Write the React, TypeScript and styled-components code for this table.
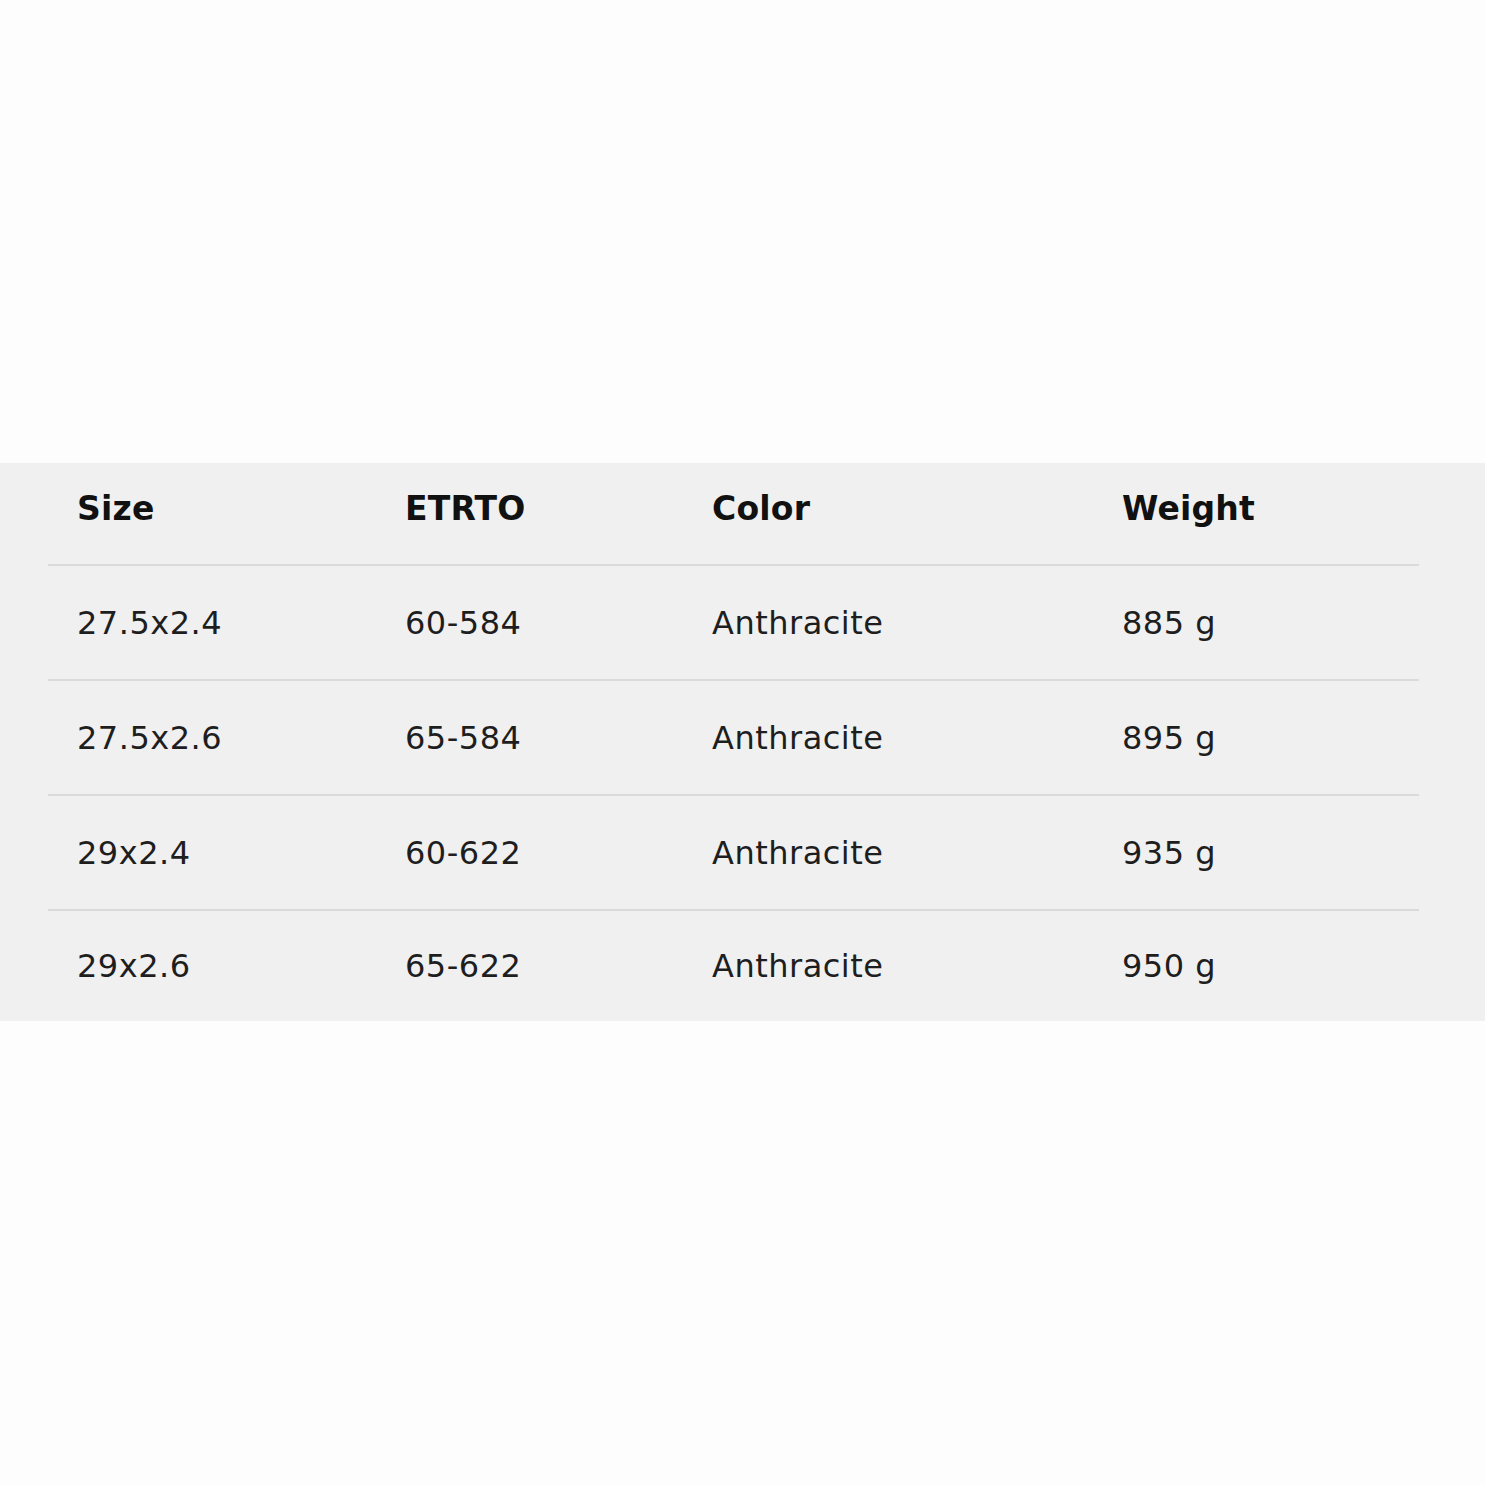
import React from 'react';
import styled, { createGlobalStyle } from 'styled-components';

const GlobalStyle = createGlobalStyle`
  html, body {
    margin: 0;
    padding: 0;
    background: #fdfdfd;
  }
  body {
    font-family: "DejaVu Sans", "Liberation Sans", sans-serif;
  }
`;

const Page = styled.div`
  width: 1485px;
  min-height: 1485px;
  padding-top: 463px;
  box-sizing: border-box;
`;

const SpecPanel = styled.section`
  background: #f0f0f0;
  padding: 0 66px 0 48px;
`;

const Row = styled.div<{ $head?: boolean; $last?: boolean }>`
  display: grid;
  grid-template-columns: 328px 307px 410px 326px;
  align-items: center;
  box-sizing: border-box;
  height: ${p => (p.$head ? '103px' : p.$last ? '110px' : '115px')};
  padding-bottom: ${p => (p.$head ? '10px' : '0')};
  border-bottom: ${p => (p.$last ? 'none' : '2px solid #dadada')};
`;

const HeadCell = styled.div`
  padding-left: 29px;
  font-size: 33px;
  font-weight: 700;
  color: #111;
  letter-spacing: 0.2px;
`;

const Cell = styled.div`
  padding-left: 29px;
  font-size: 32px;
  font-weight: 400;
  color: #1e1e1e;
  letter-spacing: 0.5px;
`;

const columns = ['Size', 'ETRTO', 'Color', 'Weight'];

const rows = [
  ['27.5x2.4', '60-584', 'Anthracite', '885 g'],
  ['27.5x2.6', '65-584', 'Anthracite', '895 g'],
  ['29x2.4', '60-622', 'Anthracite', '935 g'],
  ['29x2.6', '65-622', 'Anthracite', '950 g'],
];

export default function App() {
  return (
    <>
      <GlobalStyle />
      <Page>
        <SpecPanel>
          <Row $head>
            {columns.map(c => (
              <HeadCell key={c}>{c}</HeadCell>
            ))}
          </Row>
          {rows.map((r, i) => (
            <Row key={r[0]} $last={i === rows.length - 1}>
              {r.map((v, j) => (
                <Cell key={j}>{v}</Cell>
              ))}
            </Row>
          ))}
        </SpecPanel>
      </Page>
    </>
  );
}
